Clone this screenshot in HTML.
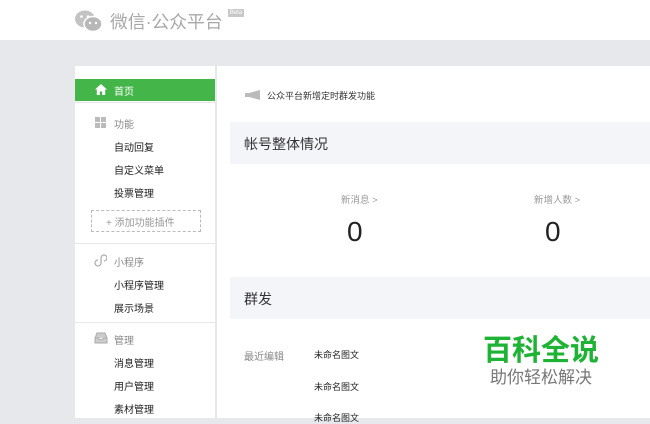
<!DOCTYPE html>
<html><head><meta charset="utf-8"><style>
*{margin:0;padding:0;box-sizing:border-box}
body{width:650px;height:418px;overflow:hidden;background:#e7e8eb;font-family:"Liberation Sans","Noto Sans CJK SC",sans-serif;position:relative;color:#353535}
.hdr{position:absolute;left:0;top:0;width:650px;height:40px;background:#fff}
.abs{position:absolute;white-space:nowrap}
.side{position:absolute;left:75px;top:66px;width:140px;height:352px;background:#fff}
.main{position:absolute;left:217px;top:66px;width:433px;height:352px;background:#fff}
.s{font-size:10px;color:#222}
.g{font-size:10px;color:#888}
.sec{position:absolute;left:13px;width:420px;height:42px;background:#f4f5f9;font-size:14px;color:#333;padding:12px 0 0 14px}
.line{position:absolute;left:0;width:140px;height:1px;background:#e7e7eb}
</style></head><body>
<div class="hdr">
<svg class="abs" style="left:74px;top:9px" width="30" height="24" viewBox="0 0 30 24"><ellipse cx="11" cy="10" rx="10" ry="8.5" fill="#c3c3c3"/><ellipse cx="19" cy="15" rx="9" ry="7.5" fill="#b8b8b8" stroke="#fff" stroke-width="1.5"/><circle cx="7.5" cy="7.5" r="1.3" fill="#fff"/><circle cx="14" cy="7.5" r="1.3" fill="#fff"/><circle cx="16" cy="14" r="1.2" fill="#fff"/><circle cx="22" cy="14" r="1.2" fill="#fff"/></svg>
<div class="abs" style="left:110px;top:8px;font-size:17.8px;color:#a8a8a8">微信·公众平台</div>
<div class="abs" style="left:228px;top:9px;width:16px;height:8px;background:#c8c8c8;color:#fff;font-size:6px;line-height:8px;text-align:center">Beta</div>
</div>
<div class="side">
<div class="abs" style="left:0;top:13px;width:140px;height:22px;background:#44b549"></div>
<svg class="abs" style="left:20px;top:18px" width="12" height="11" viewBox="0 0 12 11"><path d="M6 0L0 5.5H1.8V11H4.8V7.5H7.2V11H10.2V5.5H12Z" fill="#fff"/></svg>
<div class="abs" style="left:39px;top:17px;font-size:10px;color:#fff">首页</div>
<div class="line" style="top:36px"></div>
<svg class="abs" style="left:20px;top:51px" width="11" height="11"><rect x="0" y="0" width="5" height="5" fill="#bbb"/><rect x="6" y="0" width="5" height="5" fill="#bbb"/><rect x="0" y="6" width="5" height="5" fill="#bbb"/><rect x="6" y="6" width="5" height="5" fill="#bbb"/></svg>
<div class="abs g" style="left:39px;top:50px">功能</div>
<div class="abs s" style="left:39px;top:73px">自动回复</div>
<div class="abs s" style="left:39px;top:96px">自定义菜单</div>
<div class="abs s" style="left:39px;top:119px">投票管理</div>
<div class="abs" style="left:16px;top:144px;width:110px;height:22px;border:1px dashed #bbb;font-size:10px;color:#999;padding:3px 0 0 14px">+ 添加功能插件</div>
<div class="line" style="top:177px"></div>
<svg class="abs" style="left:19px;top:188px" width="13" height="13" viewBox="0 0 13 13"><path d="M4 12a3 3 0 1 1 0-6M4 12a3 3 0 0 0 3-3V4a3 3 0 1 1 3 3" fill="none" stroke="#aaa" stroke-width="1.2"/></svg>
<div class="abs g" style="left:39px;top:188px">小程序</div>
<div class="abs s" style="left:39px;top:211px">小程序管理</div>
<div class="abs s" style="left:39px;top:234px">展示场景</div>
<div class="line" style="top:256px"></div>
<svg class="abs" style="left:19px;top:266px" width="14" height="12" viewBox="0 0 14 12"><path d="M1 6L3 1H11L13 6V11H1Z M1 6H4.5L5.5 7.5H8.5L9.5 6H13" fill="#ccc" stroke="#aaa" stroke-width="1"/></svg>
<div class="abs g" style="left:39px;top:266px">管理</div>
<div class="abs s" style="left:39px;top:289px">消息管理</div>
<div class="abs s" style="left:39px;top:312px">用户管理</div>
<div class="abs s" style="left:39px;top:335px">素材管理</div>
</div>
<div class="main">
<svg class="abs" style="left:28px;top:24px" width="15" height="10" viewBox="0 0 15 10"><path d="M0 3H4L15 0V10L4 7H0Z" fill="#bbb"/></svg>
<div class="abs" style="left:50px;top:23px;font-size:9px;color:#333">公众平台新增定时群发功能</div>
<div class="sec" style="top:56px">帐号整体情况</div>
<div class="abs" style="left:124px;top:126px;font-size:9.5px;color:#999">新消息 &gt;</div>
<div class="abs" style="left:130px;top:150px;font-size:28px;color:#222">0</div>
<div class="abs" style="left:317px;top:126px;font-size:9.5px;color:#999">新增人数 &gt;</div>
<div class="abs" style="left:328px;top:150px;font-size:28px;color:#222">0</div>
<div class="sec" style="top:211px">群发</div>
<div class="abs" style="left:27px;top:282px;font-size:10px;color:#888">最近编辑</div>
<div class="abs" style="left:97px;top:282px;font-size:9px;color:#222">未命名图文</div>
<div class="abs" style="left:97px;top:314px;font-size:9px;color:#222">未命名图文</div>
<div class="abs" style="left:97px;top:345px;font-size:9px;color:#222">未命名图文</div>
<div class="abs" style="left:245px;top:258px;width:165px;height:80px;background:#fff"></div>
<div class="abs" style="left:266px;top:261px;font-size:29px;font-weight:bold;color:#1fb335">百科全说</div>
<div class="abs" style="left:273px;top:297px;font-size:17px;color:#777">助你轻松解决</div>
</div>
</body></html>
